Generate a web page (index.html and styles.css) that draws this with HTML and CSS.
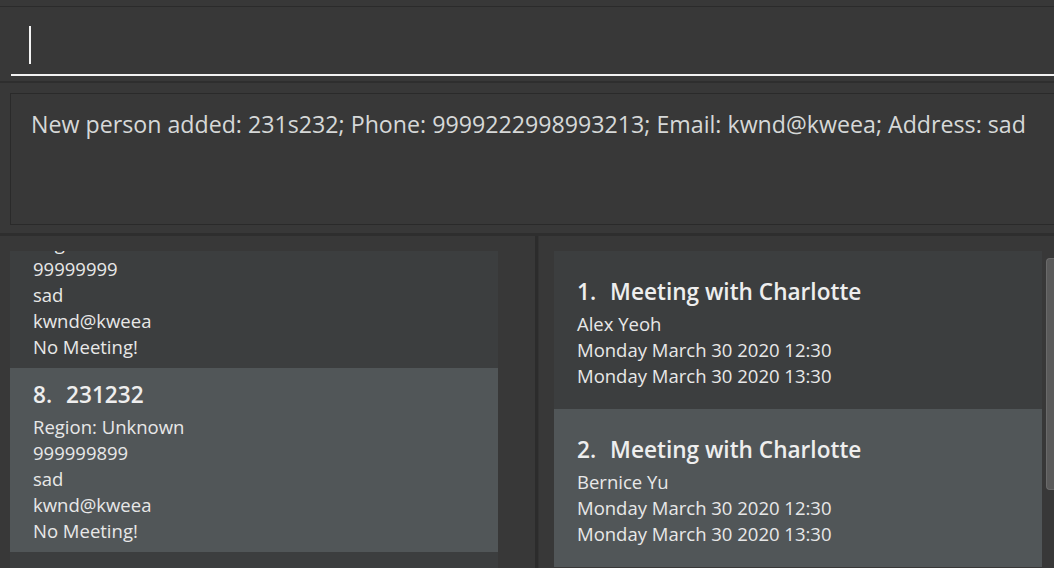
FILE: index.html
```html
<!DOCTYPE html>
<html>
<head>
<meta charset="utf-8">
<link rel="stylesheet" href="styles.css">
</head>
<body>
<div class="app">
  <div class="command-pane">
    <div class="command-box"><span class="caret"></span></div>
  </div>
  <div class="result-pane">
    <div class="result-box">New person added: 231s232; Phone: 9999222998993213; Email: kwnd@kweea; Address: sad</div>
  </div>
  <div class="split">
    <div class="left-pane">
      <div class="viewport">
        <div class="list scrolled">
          <div class="person-card even">
            <div class="card-title"><span class="idx">7.</span>231s232</div>
            <div class="card-line">Region: Unknown</div>
            <div class="card-line">99999999</div>
            <div class="card-line">sad</div>
            <div class="card-line">kwnd@kweea</div>
            <div class="card-line">No Meeting!</div>
          </div>
          <div class="person-card odd">
            <div class="card-title"><span class="idx">8.</span>231232</div>
            <div class="card-line">Region: Unknown</div>
            <div class="card-line">999999899</div>
            <div class="card-line">sad</div>
            <div class="card-line">kwnd@kweea</div>
            <div class="card-line">No Meeting!</div>
          </div>
          <div class="person-card even"></div>
        </div>
      </div>
    </div>
    <div class="divider"></div>
    <div class="right-pane">
      <div class="viewport">
        <div class="list">
          <div class="meeting-card even">
            <div class="card-title"><span class="idx">1.</span>Meeting with Charlotte</div>
            <div class="card-line">Alex Yeoh</div>
            <div class="card-line">Monday March 30 2020 12:30</div>
            <div class="card-line">Monday March 30 2020 13:30</div>
          </div>
          <div class="meeting-card odd">
            <div class="card-title"><span class="idx">2.</span>Meeting with Charlotte</div>
            <div class="card-line">Bernice Yu</div>
            <div class="card-line">Monday March 30 2020 12:30</div>
            <div class="card-line">Monday March 30 2020 13:30</div>
          </div>
        </div>
      </div>
      <div class="scrollbar"><div class="thumb"></div></div>
    </div>
  </div>
</div>
</body>
</html>
```
FILE: styles.css
```css
* { box-sizing: border-box; }
html, body {
  margin: 0;
  padding: 0;
  width: 1054px;
  height: 568px;
  overflow: hidden;
  background: #383838;
  font-family: "Open Sans", "Noto Sans", sans-serif;
  color: #ececec;
}
.app {
  display: flex;
  flex-direction: column;
  height: 568px;
  padding-top: 6px;
}
.command-pane {
  border-top: 1px solid #2b2b2b;
  height: 77px;
  padding: 0 0 0 11px;
  border-bottom: 2px solid #2e2e2e;
}
.command-box {
  height: 69px;
  border-bottom: 2px solid #f2f2f2;
  padding: 19px 0 0 18px;
}
.caret {
  display: block;
  width: 2px;
  height: 38px;
  background: #f4f4f4;
}
.result-pane {
  height: 153px;
  padding: 10px 0 8px 10px;
  border-bottom: 3px solid #2e2e2e;
}
.result-box {
  height: 132px;
  border: 1px solid #2a2a2a;
  border-right: none;
  padding: 14px 0 0 20px;
  font-size: 23.2px;
  line-height: 32px;
  color: #d6d8d8;
  white-space: nowrap;
  overflow: hidden;
}
.split {
  flex: 1;
  display: flex;
  min-height: 0;
}
.left-pane {
  width: 535px;
  padding: 15px 37px 0 10px;
  background: #383838;
}
.divider {
  width: 4px;
  background: #2c2c2c;
  border-right: 1px solid #333;
}
.right-pane {
  flex: 1;
  display: flex;
  padding: 15px 0 0 15px;
  background: #383838;
}
.right-pane .viewport { width: 488px; }
.viewport {
  height: 100%;
  overflow: hidden;
}
.list { display: flex; flex-direction: column; }
.scrolled { margin-top: -67px; }
.even { background: #3c3e3f; }
.odd { background: #515658; }
.person-card {
  height: 184px;
  flex-shrink: 0;
  padding: 10px 23px 8px;
}
.meeting-card {
  height: 158px;
  flex-shrink: 0;
  padding: 24px 23px 21px;
}
.card-title {
  font-size: 22.6px;
  font-weight: 600;
  line-height: 34px;
  margin-bottom: 2px;
  color: #eeeeee;
  white-space: nowrap;
}
.idx {
  display: inline-block;
  margin-right: 14px;
}
.card-line {
  font-size: 18.5px;
  line-height: 26px;
  color: #e8e8e8;
  white-space: nowrap;
}
.scrollbar {
  width: 12px;
  padding: 7px 0 0 4px;
}
.thumb {
  width: 8px;
  height: 232px;
  background: #5a5a5a;
  border: 1px solid #6a6a6a;
  border-right: none;
  border-radius: 4px 0 0 4px;
}
```
